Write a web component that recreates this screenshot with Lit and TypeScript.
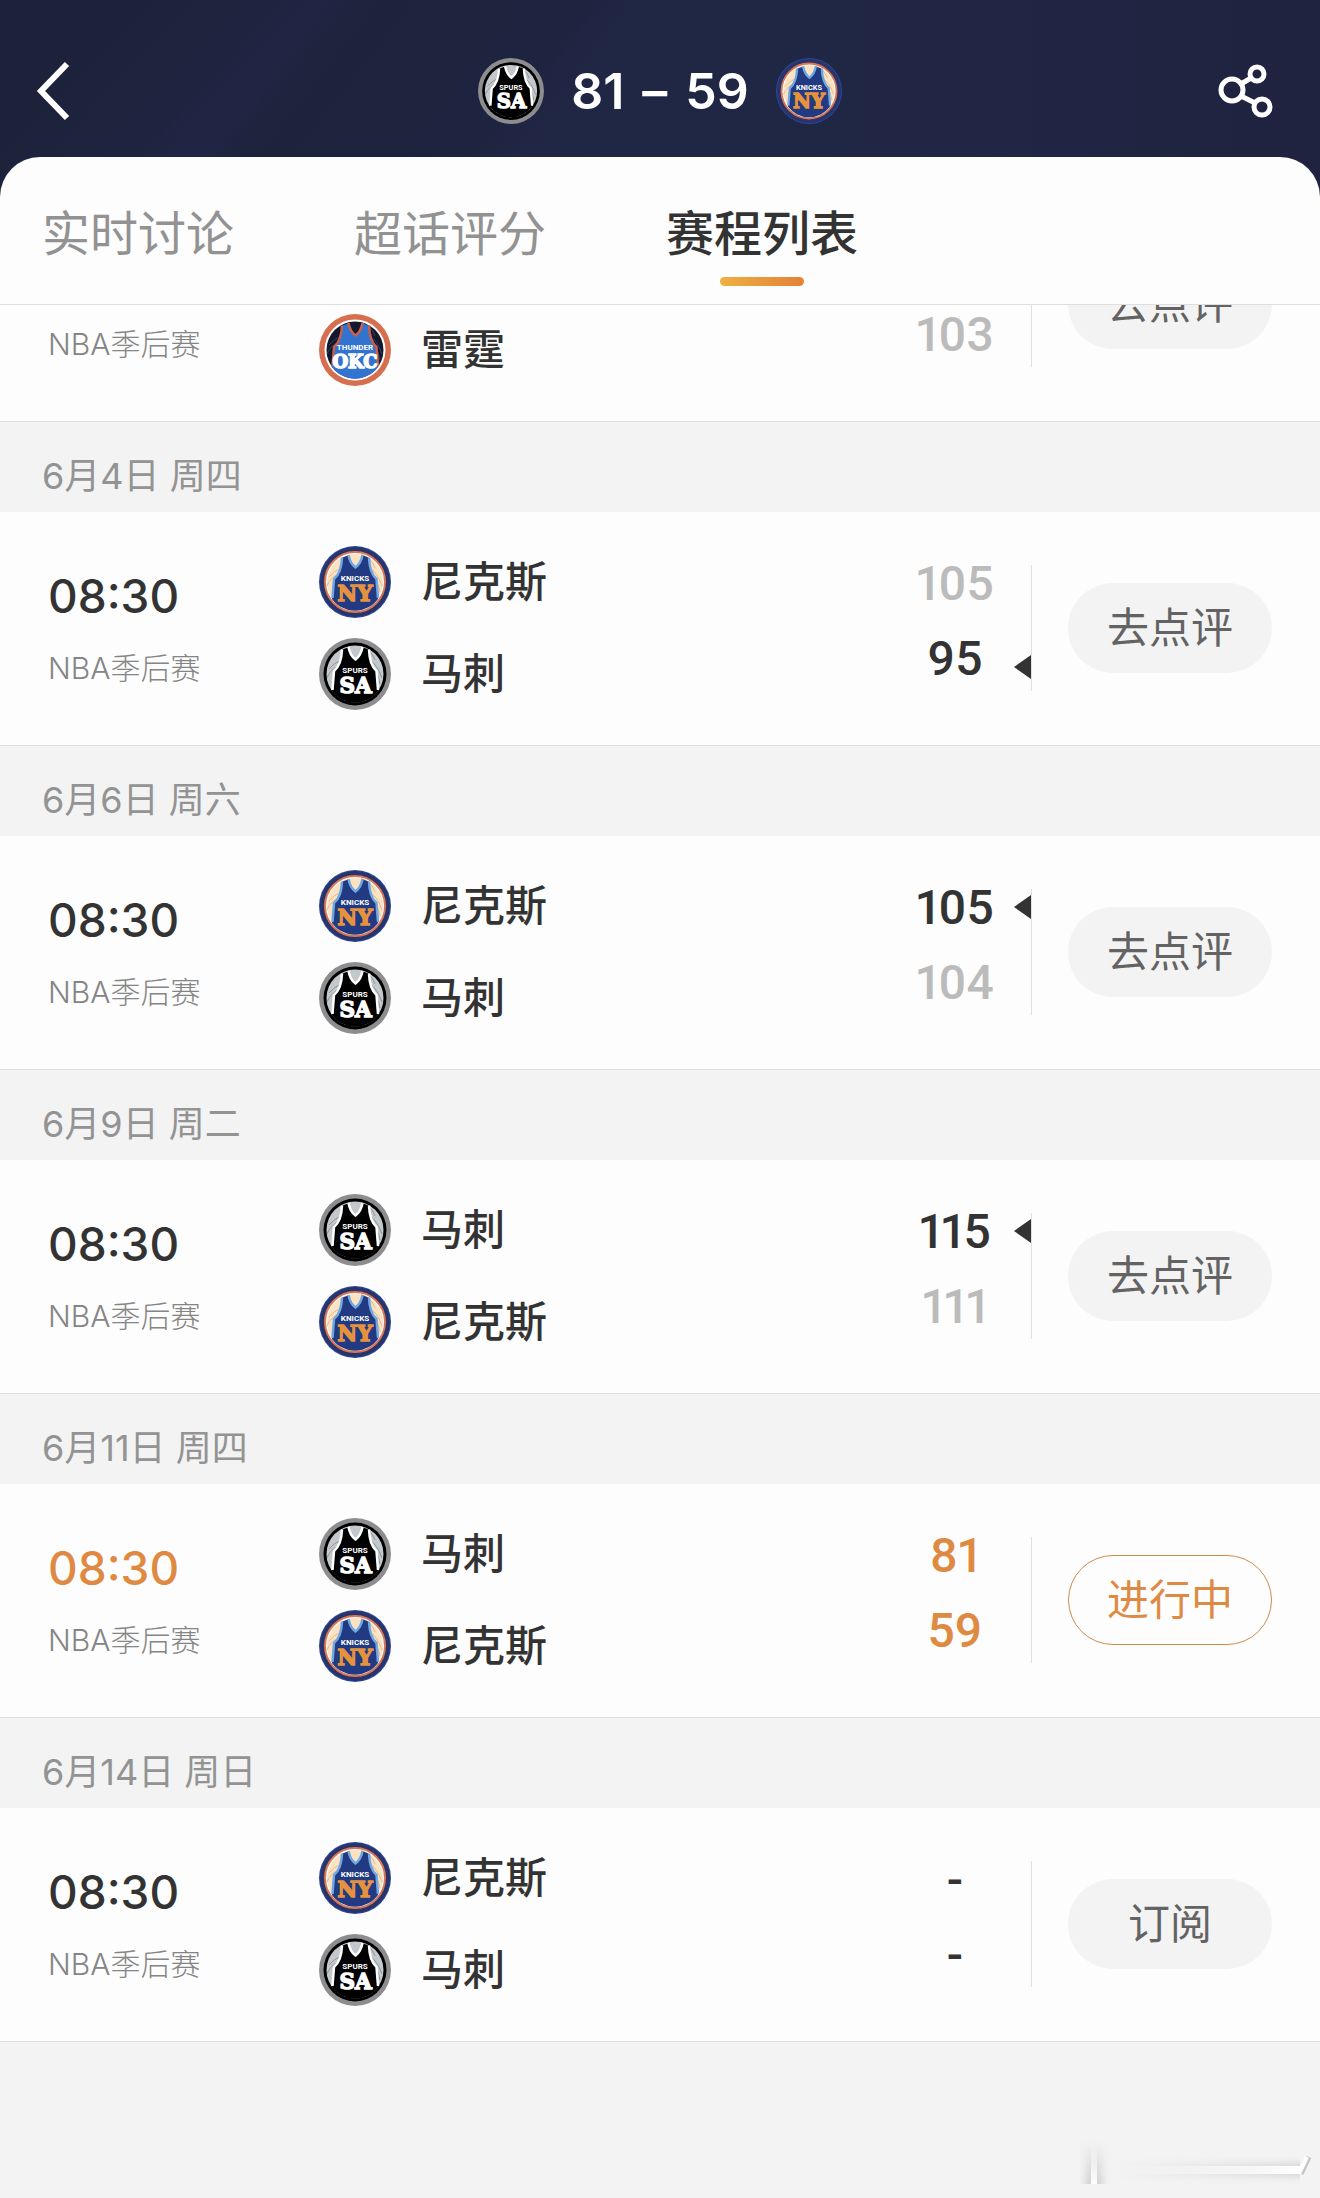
import { LitElement, html, svg, css, nothing } from "lit";
import { customElement, property, state } from "lit/decorators.js";
import { classMap } from "lit/directives/class-map.js";

type TeamId = "knicks" | "spurs" | "thunder";

interface Side {
  team: TeamId;
  score: string;
}

interface Game {
  date: string;
  time: string;
  sides: (Side | null)[];
  winner: number;
  action: string;
  live?: boolean;
}

const TEAM_NAMES: Record<TeamId, string> = {
  knicks: "尼克斯",
  spurs: "马刺",
  thunder: "雷霆",
};

const TABS = ["实时讨论", "超话评分", "赛程列表"];

const GAMES: Game[] = [
  { date: "", time: "", sides: [null, { team: "thunder", score: "103" }], winner: 0, action: "去点评" },
  {
    date: "6月4日 周四",
    time: "08:30",
    sides: [{ team: "knicks", score: "105" }, { team: "spurs", score: "95" }],
    winner: 1,
    action: "去点评",
  },
  {
    date: "6月6日 周六",
    time: "08:30",
    sides: [{ team: "knicks", score: "105" }, { team: "spurs", score: "104" }],
    winner: 0,
    action: "去点评",
  },
  {
    date: "6月9日 周二",
    time: "08:30",
    sides: [{ team: "spurs", score: "115" }, { team: "knicks", score: "111" }],
    winner: 0,
    action: "去点评",
  },
  {
    date: "6月11日 周四",
    time: "08:30",
    sides: [{ team: "spurs", score: "81" }, { team: "knicks", score: "59" }],
    winner: -1,
    action: "进行中",
    live: true,
  },
  {
    date: "6月14日 周日",
    time: "08:30",
    sides: [{ team: "knicks", score: "-" }, { team: "spurs", score: "-" }],
    winner: -1,
    action: "订阅",
  },
];

/* Round badge with a jersey in the team's colours. */
@customElement("team-badge")
export class TeamBadge extends LitElement {
  @property() team: TeamId = "knicks";

  static styles = css`
    :host {
      display: block;
      flex: none;
      width: 72px;
      height: 72px;
    }
    .badge {
      display: block;
      width: 100%;
      height: 100%;
    }
    .nick {
      font: 700 16px Roboto, "Liberation Sans", sans-serif;
      text-anchor: middle;
      fill: #fff;
    }
    .city {
      font: 700 43px "DejaVu Serif", serif;
      text-anchor: middle;
      fill: #fff;
      stroke: #fff;
      stroke-width: 3;
    }
    .city.long {
      font-size: 36px;
    }
    .city.orange {
      fill: #e5923f;
      stroke: #e5923f;
    }
  `;

  private jersey(body: string, trim: string) {
    return svg`
      <path d="M47 23 L58 19 Q62 35 73 43 Q84 35 88 19 L99 23 Q100 54 115 66 L118 106 A57 57 0 0 1 26 106 L30 66 Q45 54 47 23Z" fill=${body} />
      <path d="M46 23 Q45 54 30 66 L27 104" fill="none" stroke=${trim} stroke-width="5" />
      <path d="M100 23 Q101 54 115 66 L118 104" fill="none" stroke=${trim} stroke-width="5" />
      <path d="M59 18 Q62 35 73 43 Q84 35 87 18" fill="none" stroke=${trim} stroke-width="5" />`;
  }

  private seams(color: string) {
    return svg`<path d="M16 80 Q24 60 44 54 M20 62 Q30 50 44 44 M84 17 Q104 22 112 44 M101 44 Q116 52 126 80 M104 58 Q116 62 122 92" fill="none" stroke=${color} stroke-width="2" />`;
  }

  render() {
    switch (this.team) {
      case "spurs":
        return html`<svg class="badge" viewBox="0 0 144 144" role="img" aria-label="马刺">
          <circle cx="72" cy="72" r="72" fill="#8d8d8f" />
          <circle cx="72" cy="72" r="63" fill="#000" />
          <circle cx="72" cy="72" r="57" fill="#c3c8cc" />
          ${this.seams("#8f9498")} ${this.jersey("#000", "#fff")}
          <text class="nick" x="72" y="69">SPURS</text>
          <text class="city" x="73" y="110">SA</text>
        </svg>`;
      case "thunder":
        return html`<svg class="badge" viewBox="0 0 144 144" role="img" aria-label="雷霆">
          <circle cx="72" cy="72" r="72" fill="#d66f50" />
          <circle cx="72" cy="72" r="61" fill="#fff" />
          <circle cx="72" cy="72" r="57" fill="#14182b" />
          ${this.seams("#34405f")} ${this.jersey("#3173cf", "#c9604f")}
          <text class="nick" x="72" y="71">THUNDER</text>
          <text class="city long" x="72" y="107">OKC</text>
        </svg>`;
      default:
        return html`<svg class="badge" viewBox="0 0 144 144" role="img" aria-label="尼克斯">
          <circle cx="72" cy="72" r="72" fill="#2749a0" />
          <circle cx="72" cy="72" r="70" fill="#2b3468" />
          <circle cx="72" cy="72" r="60" fill="#fff" stroke="#d87757" stroke-width="4" />
          <circle cx="72" cy="72" r="56" fill="#fbe3c2" />
          ${this.seams("#dfb98e")} ${this.jersey("#213a82", "#6fa6e4")}
          <text class="nick" x="72" y="69">KNICKS</text>
          <text class="city orange" x="72" y="110">NY</text>
        </svg>`;
    }
  }
}

/* One fixture: kick-off, both teams, scores and the action button. */
@customElement("game-row")
export class GameRow extends LitElement {
  @property({ attribute: false }) game!: Game;

  static styles = css`
    :host {
      display: block;
    }
    .row {
      display: flex;
      align-items: center;
      box-sizing: border-box;
      min-height: 234px;
      padding: 0 48px 2px;
      background: #fdfdfd;
      border-bottom: 1px solid #dedede;
    }
    .when {
      flex: none;
      width: 271px;
    }
    .time {
      min-height: 56px;
      font-size: 46px;
      line-height: 56px;
      font-weight: 500;
      color: #333;
    }
    .league {
      margin-top: 24px;
      font-size: 30px;
      line-height: 40px;
      font-weight: 300;
      color: #858585;
    }
    .teams {
      display: flex;
      flex: 1;
      flex-direction: column;
      gap: 20px;
    }
    .team {
      display: flex;
      align-items: center;
      gap: 30px;
      min-height: 72px;
      font-size: 42px;
      line-height: 60px;
      font-weight: 500;
      color: #333;
    }
    .scores {
      display: flex;
      flex: none;
      flex-direction: column;
      align-self: flex-start;
      width: 118px;
      padding-top: 34px;
      font-family: Roboto, "Liberation Sans", sans-serif;
      font-size: 48px;
      line-height: 75px;
      font-weight: 500;
      font-variant-numeric: proportional-nums;
      text-align: center;
      color: #333;
    }
    .score {
      min-height: 75px;
    }
    .lost {
      color: #bbb;
    }
    .live .time,
    .live .scores {
      color: #df8a43;
    }
    .marks {
      display: flex;
      flex: none;
      flex-direction: column;
      align-self: flex-start;
      gap: 60px;
      padding-top: 59px;
    }
    .mark {
      width: 17px;
      height: 24px;
    }
    .mark.won {
      background: #333;
      clip-path: polygon(0 50%, 100% 0, 100% 100%);
    }
    .divider {
      flex: none;
      width: 1px;
      height: 126px;
      background: #e0e0e0;
    }
    .action {
      flex: none;
      width: 204px;
      height: 90px;
      margin-left: 36px;
      padding: 0;
      border: 0;
      border-radius: 45px;
      background: #f3f3f3;
      font: inherit;
      font-size: 42px;
      line-height: 60px;
      color: #636363;
    }
    .live .action {
      border: 1px solid #cf8a4a;
      background: transparent;
      color: #df8a43;
    }
  `;

  render() {
    const g = this.game;
    return html`<article class=${classMap({ row: true, live: !!g.live })}>
      <div class="when">
        <div class="time">${g.time}</div>
        <div class="league">NBA季后赛</div>
      </div>
      <div class="teams">
        ${g.sides.map(
          (s) => html`<div class="team">
            ${s ? html`<team-badge team=${s.team}></team-badge><span>${TEAM_NAMES[s.team]}</span>` : nothing}
          </div>`
        )}
      </div>
      <div class="scores">
        ${g.sides.map(
          (s, i) => html`<div class=${classMap({ score: true, lost: g.winner >= 0 && g.winner !== i })}>${s?.score ?? nothing}</div>`
        )}
      </div>
      <div class="marks">
        ${g.sides.map((_, i) => html`<span class=${classMap({ mark: true, won: g.winner === i })}></span>`)}
      </div>
      <div class="divider"></div>
      <button class="action" type="button">${g.action}</button>
    </article>`;
  }
}

@customElement("app-root")
export class AppRoot extends LitElement {
  @state() private tab = 2;

  static styles = css`
    :host {
      display: flex;
      flex-direction: column;
      position: relative;
      min-height: 100vh;
      background: #f3f3f3;
      font-family: Inter, "Noto Sans CJK SC", sans-serif;
    }
    .header {
      display: flex;
      align-items: center;
      justify-content: space-between;
      box-sizing: border-box;
      height: 197px;
      padding: 24px 32px 40px;
      background:
        linear-gradient(135deg, #1d223a 0 8%, transparent 24%),
        linear-gradient(128deg, transparent 22%, #1d233a 26%, #1e2440 40%, transparent 44%),
        linear-gradient(90deg, #1f2543, #202745 60%, #1f2340);
    }
    .icon-button {
      display: flex;
      padding: 0;
      border: 0;
      background: none;
    }
    .icon {
      display: block;
      width: 72px;
      height: 72px;
    }
    .scoreboard {
      display: flex;
      align-items: center;
      gap: 27px;
      margin: 0;
      font-size: 50px;
      line-height: 60px;
      font-weight: 600;
      color: #fff;
    }
    .points {
      display: flex;
      gap: 18px;
    }
    .header-badge {
      width: 66px;
      height: 66px;
    }
    .tabs {
      display: flex;
      gap: 120px;
      box-sizing: border-box;
      height: 148px;
      margin-top: -40px;
      padding: 41px 42px 0;
      border-bottom: 1px solid #dedede;
      border-radius: 40px 40px 0 0;
      background: #fdfdfd;
    }
    .tab {
      display: flex;
      flex-direction: column;
      align-items: center;
      gap: 7px;
      height: 88px;
      padding: 0;
      border: 0;
      background: none;
      font: inherit;
      font-size: 48px;
      line-height: 72px;
      color: #929292;
    }
    .tab.current {
      font-weight: 500;
      color: #333;
    }
    .tab.current::after {
      content: "";
      flex: none;
      width: 84px;
      height: 9px;
      border-radius: 5px;
      background: linear-gradient(90deg, #edb042, #e58138);
    }
    .list {
      overflow: hidden;
    }
    /* The list is scrolled so that half of its first row is out of view. */
    .games {
      margin-top: -117px;
    }
    .date {
      box-sizing: border-box;
      height: 90px;
      margin: 0;
      padding: 29px 42px 0;
      font-size: 36px;
      line-height: 50px;
      font-weight: 400;
      color: #939393;
    }
    .glint {
      position: absolute;
      right: 0;
      bottom: 0;
      width: 240px;
      height: 64px;
    }
  `;

  render() {
    return html`
      <header class="header">
        <button class="icon-button" type="button" aria-label="返回">
          <svg class="icon" viewBox="0 0 72 72" fill="none" stroke="#fff" stroke-width="6">
            <path d="M35 9 L9 36 L35 63" />
          </svg>
        </button>
        <h1 class="scoreboard">
          <team-badge class="header-badge" team="spurs"></team-badge>
          <span class="points"><span>81</span><span>–</span><span>59</span></span>
          <team-badge class="header-badge" team="knicks"></team-badge>
        </h1>
        <button class="icon-button" type="button" aria-label="分享">
          <svg class="icon" viewBox="0 0 72 72" fill="none" stroke="#fff" stroke-width="5">
            <circle cx="16" cy="35" r="11" />
            <circle cx="41" cy="19" r="7" />
            <circle cx="46" cy="52" r="8" />
            <path d="M25 29 L35 23 M25 41 L39 48" />
          </svg>
        </button>
      </header>
      <nav class="tabs">
        ${TABS.map(
          (t, i) => html`<button
            type="button"
            class=${classMap({ tab: true, current: i === this.tab })}
            @click=${() => (this.tab = i)}
          >${t}</button>`
        )}
      </nav>
      <main class="list">
        <div class="games">
          ${GAMES.map(
            (g) => html`${g.date ? html`<h2 class="date">${g.date}</h2>` : nothing}<game-row .game=${g}></game-row>`
          )}
        </div>
      </main>
      <svg class="glint" viewBox="0 0 240 64" aria-hidden="true">
        <defs>
          <linearGradient id="down" x1="0" y1="0" x2="0" y2="1">
            <stop offset="0" stop-color="#f3f3f3" />
            <stop offset="1" stop-color="#cdcdcd" />
          </linearGradient>
          <linearGradient id="bar" x1="0" y1="0" x2="0" y2="1">
            <stop offset="0" stop-color="#fff" stop-opacity="0" />
            <stop offset="1" stop-color="#fff" />
          </linearGradient>
          <linearGradient id="across" x1="0" y1="0" x2="1" y2="0">
            <stop offset="0" stop-color="#d8d8d8" stop-opacity="0" />
            <stop offset="1" stop-color="#d0d0d0" />
          </linearGradient>
          <linearGradient id="beam" x1="0" y1="0" x2="1" y2="0">
            <stop offset="0" stop-color="#fff" stop-opacity="0" />
            <stop offset="1" stop-color="#fff" />
          </linearGradient>
          <filter id="soft" x="-1" y="0" width="3" height="1"><feGaussianBlur stdDeviation="4 0" /></filter>
          <filter id="softer" x="0" y="-2" width="1" height="5"><feGaussianBlur stdDeviation="0 4" /></filter>
        </defs>
        <rect x="6" y="6" width="16" height="44" fill="url(#down)" filter="url(#soft)" />
        <rect x="11" y="6" width="6" height="44" fill="url(#bar)" />
        <rect x="24" y="30" width="196" height="12" fill="url(#across)" filter="url(#softer)" />
        <rect x="24" y="32" width="198" height="8" fill="url(#beam)" />
        <path d="M221 40 L229 23" stroke="#c4c4c4" stroke-width="5" />
        <path d="M219 40 L227 23" stroke="#fff" stroke-width="4" />
      </svg>
    `;
  }
}
